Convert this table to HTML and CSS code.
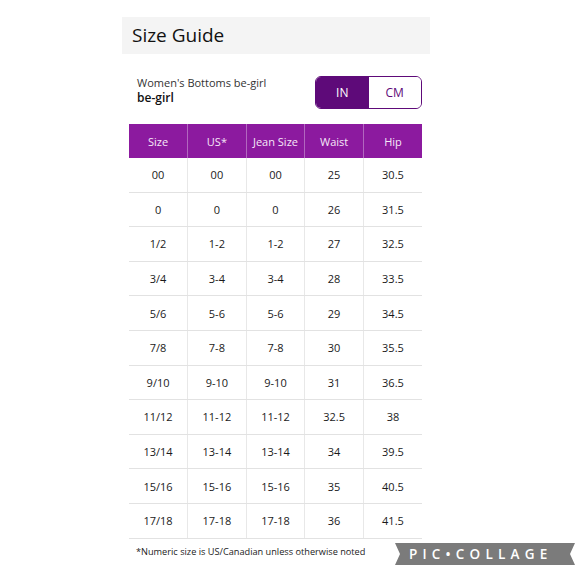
FILE: index.html
```html
<!DOCTYPE html>
<html>
<head>
<meta charset="utf-8">
<link rel="stylesheet" href="styles.css">
</head>
<body>
<div class="guide">
  <div class="title-bar">Size Guide</div>
  <div class="info">
    <div class="info-text">
      <div class="brand-line">Women's Bottoms be-girl</div>
      <div class="brand">be-girl</div>
    </div>
    <div class="toggle">
      <div class="toggle-opt active">IN</div>
      <div class="toggle-opt">CM</div>
    </div>
  </div>
  <table class="sizes">
    <thead>
      <tr><th>Size</th><th>US*</th><th>Jean Size</th><th>Waist</th><th>Hip</th></tr>
    </thead>
    <tbody>
      <tr><td>00</td><td>00</td><td>00</td><td>25</td><td>30.5</td></tr>
      <tr><td>0</td><td>0</td><td>0</td><td>26</td><td>31.5</td></tr>
      <tr><td>1/2</td><td>1-2</td><td>1-2</td><td>27</td><td>32.5</td></tr>
      <tr><td>3/4</td><td>3-4</td><td>3-4</td><td>28</td><td>33.5</td></tr>
      <tr><td>5/6</td><td>5-6</td><td>5-6</td><td>29</td><td>34.5</td></tr>
      <tr><td>7/8</td><td>7-8</td><td>7-8</td><td>30</td><td>35.5</td></tr>
      <tr><td>9/10</td><td>9-10</td><td>9-10</td><td>31</td><td>36.5</td></tr>
      <tr><td>11/12</td><td>11-12</td><td>11-12</td><td>32.5</td><td>38</td></tr>
      <tr><td>13/14</td><td>13-14</td><td>13-14</td><td>34</td><td>39.5</td></tr>
      <tr><td>15/16</td><td>15-16</td><td>15-16</td><td>35</td><td>40.5</td></tr>
      <tr><td>17/18</td><td>17-18</td><td>17-18</td><td>36</td><td>41.5</td></tr>
    </tbody>
  </table>
  <div class="note">*Numeric size is US/Canadian unless otherwise noted</div>
</div>
<div class="watermark">
  <svg class="ribbon" width="180" height="22" viewBox="0 0 180 22"><polygon points="0,0 180,0 175,11 180,22 0,22 5,11" fill="#7b7b7b"/></svg>
  <span class="wm-text">PIC•COLLAGE</span>
</div>
</body>
</html>
```
FILE: styles.css
```css
html, body {
  margin: 0;
  padding: 0;
  background: #ffffff;
}
body {
  font-family: "Open Sans", "Noto Sans", sans-serif;
  color: #1a1a1a;
  padding-top: 17px;
  position: relative;
  height: 563px;
}
.guide {
  width: 308px;
  margin-left: 122px;
}
.title-bar {
  height: 37px;
  line-height: 37px;
  background: #f4f4f4;
  padding-left: 10px;
  font-size: 19px;
  color: #111;
}
.info {
  display: flex;
  justify-content: space-between;
  align-items: center;
  margin-top: 22px;
  padding: 0 8px 0 15px;
}
.info-text {
  padding-bottom: 4px;
}
.brand-line {
  font-size: 11px;
  line-height: 14px;
  color: #333;
}
.brand {
  font-size: 12px;
  line-height: 15px;
  font-weight: 600;
  color: #111;
}
.toggle {
  display: flex;
  width: 107px;
  height: 33px;
  box-sizing: border-box;
  border: 1.5px solid #5e0a79;
  border-radius: 6px;
  overflow: hidden;
}
.toggle-opt {
  flex: 1;
  display: flex;
  align-items: center;
  justify-content: center;
  font-size: 12px;
  color: #5e0a79;
  background: #fff;
}
.toggle-opt.active {
  background: #5e0a79;
  color: #fff;
}
.sizes {
  margin-top: 15px;
  margin-left: 7px;
  width: 293px;
  border-collapse: collapse;
  table-layout: fixed;
  font-size: 11px;
}
.sizes th {
  background: #8c1a9f;
  color: #f6e8f8;
  font-weight: 400;
  height: 34px;
  padding: 0;
  border-left: 1px solid #b267bf;
}
.sizes th:first-child {
  border-left: none;
}
.sizes td {
  height: 33.6px;
  padding: 0;
  text-align: center;
  border-bottom: 1px solid #e2e2e2;
  border-left: 1px solid #e8e8e8;
  color: #1a1a1a;
}
.sizes td:first-child {
  border-left: none;
}
.note {
  margin-top: 6px;
  padding-left: 14px;
  font-size: 9.2px;
  color: #222;
}
.watermark {
  position: absolute;
  left: 395px;
  top: 543px;
  width: 180px;
  height: 22px;
}
.ribbon {
  display: block;
}
.wm-text {
  position: absolute;
  left: 14px;
  top: 0;
  line-height: 22px;
  font-size: 13.5px;
  font-weight: 600;
  letter-spacing: 5.2px;
  color: #fff;
  font-family: "Open Sans", sans-serif;
}
```
